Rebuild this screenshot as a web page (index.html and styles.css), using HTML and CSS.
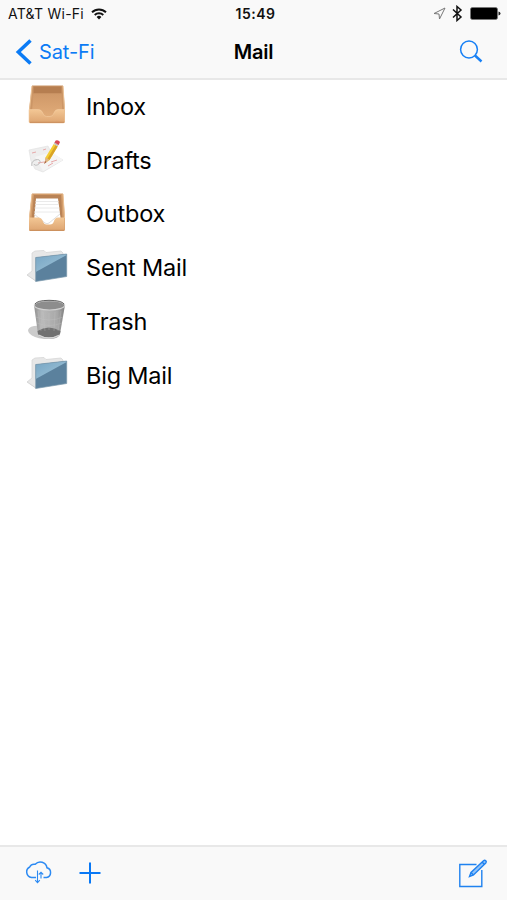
FILE: index.html
```html
<!DOCTYPE html>
<html lang="en">
<head>
<meta charset="utf-8">
<title>Mail</title>
<link rel="stylesheet" href="styles.css">
</head>
<body>
<svg class="defs" aria-hidden="true">
  <defs>
    <linearGradient id="wood" x1="0" y1="0" x2="0" y2="1"><stop offset="0" stop-color="#cf9868"/><stop offset="1" stop-color="#e2ad7a"/></linearGradient>
    <linearGradient id="front" x1="0" y1="0" x2="0" y2="1"><stop offset="0" stop-color="#f3c795"/><stop offset="1" stop-color="#dda470"/></linearGradient>
    <linearGradient id="blue" x1="0" y1="0" x2="1" y2="1"><stop offset="0" stop-color="#76a5c4"/><stop offset="1" stop-color="#a3c6d9"/></linearGradient>
    <linearGradient id="metal" x1="0" y1="0" x2="1" y2="0"><stop offset="0" stop-color="#909090"/><stop offset=".25" stop-color="#bababa"/><stop offset=".75" stop-color="#a8a8a8"/><stop offset="1" stop-color="#808080"/></linearGradient>
    <symbol id="folder" viewBox="0 0 56 54">
      <path d="M7 34l9-3v9.500z" fill="#c6c6c6"/>
      <path d="M7 34l5-4V12l3-2 9-.5 2 2 15-1.500 2 2v6L16 40z" fill="#e7e7e7" stroke="#d2d2d2" stroke-width=".7"/>
      <path d="M15.700 16.500L46.700 13v22.500l-31 5z" fill="#5b819d"/>
      <path d="M15.700 16.500L46.700 13v1L15.700 31z" fill="url(#blue)"/>
      <path d="M15.700 16.500L46.700 13v22.500l-31 5z" fill="none" stroke="#7897aa" stroke-width=".7"/>
    </symbol>
  </defs>
</svg>
<div class="screen">
  <header class="top">
    <div class="status">
      <div class="carrier"><span>AT&amp;T Wi-Fi</span>
        <svg width="16" height="12" viewBox="0 0 16 12" fill="none" stroke="#111" stroke-width="1.900"><path d="M1 4.300a10 10 0 0 1 14 0M3.700 7a6.200 6.200 0 0 1 8.600 0"/><path d="M5.600 8.900a3.500 3.500 0 0 1 4.800 0L8 11.500z" fill="#111" stroke="none"/></svg>
      </div>
      <div class="clock">15:49</div>
      <div class="indicators">
        <svg width="13" height="13" viewBox="0 0 13 13" fill="none" stroke="#777" stroke-width="1"><path d="M12 1L1 6.500l5 .5.500 5z"/></svg>
        <svg class="bt" width="11" height="17" viewBox="0 0 11 17" fill="none" stroke="#111" stroke-width="1.500"><path d="M1 4.500l8 7.500-4 3.500v-14L9 5l-8 7.500"/></svg>
        <svg class="battery" width="31" height="13" viewBox="0 0 31 13"><rect x=".5" y=".5" width="27" height="12" rx="1.800" fill="#000" stroke="#777" stroke-width=".7"/><path d="M28.500 4.500q2 .4 2 2t-2 2z" fill="#222"/></svg>
      </div>
    </div>
    <nav class="nav">
      <a class="back"><svg width="17" height="26" viewBox="0 0 17 26" fill="none" stroke="#0b7bf5" stroke-width="3.500"><path d="M15.500 1.500L3.300 13l12.200 11.500"/></svg><span>Sat-Fi</span></a>
      <h1>Mail</h1>
      <a class="search"><svg width="24" height="24" viewBox="0 0 24 24" fill="none" stroke="#1780f5"><circle cx="10" cy="9.500" r="8.400" stroke-width="1.500"/><path d="M16 15.500l6.500 6" stroke-width="2.400"/></svg></a>
    </nav>
  </header>
  <ul class="folders">
    <li><svg viewBox="0 0 56 54">
      <path d="M12 6.500h31l2 24v13H9V31z" fill="#cc9666"/>
      <path d="M13.500 7.500h28v7h-28z" fill="#b67e50"/>
      <path d="M13.500 14.500h28l1 24h-31z" fill="url(#wood)"/>
      <path d="M12 7L9.500 31M43 7l1.500 24" stroke="#ecc295"/>
      <path d="M9 30.500h9.500q3 0 4.500 4 1 3 3.500 3h3.500q3 0 4-3.500 1-3.500 4-3.500h6.500v12q0 1.500-1.500 1.500H10.500Q9 44 9 42.500z" fill="url(#front)" stroke="#f3cda1" stroke-width=".6"/>
      <path d="M10 43.300h34" stroke="#c88d5a"/>
    </svg><span>Inbox</span></li>
    <li><svg viewBox="0 0 56 54">
      <path d="M9 17l19-4 4 8 11 6-20 12-8-3-4-8z" fill="#eee" stroke="#e2e2e2" stroke-width=".7"/>
      <path d="M15 24l17-5 11 8-20 11z" fill="#f5f5f5"/>
      <path d="M12 20l4-1M23 17l3-1M31 29l6-2M18 30l6-1M28 33l5-3" stroke="#e7aaaa"/>
      <path d="M12 33c-2-6 7-8 8-5s-5 6-6 3" fill="none" stroke="#bbb"/>
      <path d="M24.500 30.500l1-6L33.700 11l4 2.500L29.500 27z" fill="#f4cc32"/>
      <path d="M27.500 25.500L35.700 12l2 1.500L29.500 27z" fill="#d9a326"/>
      <path d="M25.500 24.500l4 2.500-5 3.500z" fill="#ddb486"/><path d="M25 28l1.500 1-2.300 2z" fill="#a65b50"/>
      <path d="M33.700 11l1-2 4 2.500-1 2z" fill="#c5c3bd"/>
      <path d="M34.500 9.500l1.200-2q2.800-.8 4.300 1.500l-1.300 3z" fill="#d94853"/>
    </svg><span>Drafts</span></li>
    <li><svg viewBox="0 0 56 54">
      <path d="M12 6.500h31l2 24v13H9V31z" fill="#d39c69"/>
      <path d="M14 8h27l1.500 25h-31z" fill="#b98356"/>
      <path d="M12 7L9.500 31M43 7l1.500 24" stroke="#ecc295"/>
      <path d="M16 11.500h22l3 23-12 5-15-5z" fill="#fff"/>
      <path d="M15.500 14.500h23M15 17.500h24M14.500 21h25M14 25h26" stroke="#e4e4e4" stroke-width=".8"/>
      <path d="M14 27l11 9q2 1.500 4 0l11-9" fill="none" stroke="#ddd"/>
      <path d="M9 30.500h9.500q3 0 4.500 4 1 3 3.500 3h3.500q3 0 4-3.500 1-3.500 4-3.500h6.500v12q0 1.500-1.500 1.500H10.500Q9 44 9 42.500z" fill="url(#front)"/>
      <path d="M10 43.300h34" stroke="#c88d5a"/>
    </svg><span>Outbox</span></li>
    <li><svg viewBox="0 0 56 54"><use href="#folder"/></svg><span>Sent Mail</span></li>
    <li><svg viewBox="0 0 56 54">
      <path d="M8 36q2-5 13-4l12 10q-9 5-18 1-7-3-7-7z" fill="#cbcbcb"/>
      <path d="M14 11l4 29q1 5 11 5t11-5l5-29z" fill="url(#metal)"/>
      <path d="M17.500 37q11-7 23 0l-.7 3.500q-11 6-21.700 0z" fill="#717171"/>
      <path d="M18 17l3 20M23 18l2 19M29 19v17M35 18l-1 19M41 17l-3 20M16 23q13 6 27 0M17 29q12 5 25 0" fill="none" stroke="#c5c5c5" stroke-width=".3"/>
      <ellipse cx="29.500" cy="11.300" rx="15.200" ry="4.700" fill="#8d8d8d" stroke="#d2d2d2" stroke-width="1.100"/>
      <path d="M15 10q2-3.500 14-3.700 13 .2 15 3.700" fill="none" stroke="#656565"/>
      <path d="M18.500 41q10 6 21.300 0" fill="none" stroke="#d7d7d7" stroke-width="1.300"/>
    </svg><span>Trash</span></li>
    <li><svg viewBox="0 0 56 54"><use href="#folder"/></svg><span>Big Mail</span></li>
  </ul>
  <footer class="toolbar">
    <svg class="cloud" width="28" height="25" viewBox="0 0 28 25" fill="none" stroke="#2c8af3" stroke-width="1.500"><path d="M11 17.500H6.500A5.600 5.600 0 0 1 4.700 7a5 5 0 0 1 5.500-2.700A6.800 6.800 0 0 1 22 7.800a5 5 0 0 1-.5 9.700h-3"/><path d="M12.500 10.500v12M10.200 20.200l2.300 2.500 2.300-2.500M16 18.500v-6M13.800 14.500l2.200-2.300 2.200 2.300" stroke-width="1.100"/></svg>
    <svg class="plus" width="22" height="22" viewBox="0 0 22 22" stroke="#0878f5" stroke-width="2"><path d="M11 .5v21M.5 11h21"/></svg>
    <svg class="compose" width="30" height="30" viewBox="0 0 30 30" fill="none" stroke="#1f82f0" stroke-width="1.400"><path d="M18.500 6.500H1.800v22h22V12"/><path d="M11.500 18.500l1.500-4L25.500 2.700q1.200-1 2.300.1 1 1.100 0 2.200L15.500 17z" fill="#91c3fa"/><path d="M24 4l2.500 2.500M13 14.500l2.500 2.500"/></svg>
  </footer>
</div>
</body>
</html>
```

FILE: styles.css
```css
* { box-sizing: border-box; }
body { margin: 0; background: #fff; color: #000; font-family: Inter, "Liberation Sans", sans-serif; }
svg { display: block; flex: none; }
.defs { position: absolute; width: 0; height: 0; }
.screen { display: flex; flex-direction: column; height: 900px; }
.top { height: 79.5px; background: #f9f9f9; border-bottom: 2px solid #e8e8e8; }
.status { display: grid; grid-template-columns: 1fr auto 1fr; align-items: center; height: 27px; padding: 0 6px 0 8px; font-size: 14px; color: #111; }
.carrier { display: flex; align-items: center; gap: 7px; letter-spacing: 0.25px; }
.clock { font-weight: 600; font-size: 14px; letter-spacing: 0.5px; padding-left: 2px; }
.indicators { display: flex; align-items: center; justify-content: flex-end; }
.bt { margin: 0 7px 0 6px; }
.nav { display: grid; grid-template-columns: 1fr auto 1fr; align-items: center; height: 50px; padding: 0 24px 0 15px; }
.back { display: flex; align-items: center; gap: 7px; color: #0b7bf5; font-size: 20px; letter-spacing: -0.1px; }
h1 { margin: 0; padding-left: 9px; font-size: 20px; font-weight: 600; letter-spacing: -0.2px; }
.search { justify-self: end; }
.folders { flex: 1; margin: 0; padding: 0; list-style: none; }
.folders li { display: flex; align-items: center; gap: 10px; height: 53.75px; padding-left: 20px; font-size: 23.5px; letter-spacing: -0.2px; }
.folders svg { width: 56px; height: 54px; }
.toolbar { display: flex; align-items: center; height: 55px; padding: 0 19px 2px 25px; background: #f9f9f9; border-top: 2px solid #e8e8e8; }
.plus { margin-left: 26px; }
.compose { margin-left: auto; }
```
